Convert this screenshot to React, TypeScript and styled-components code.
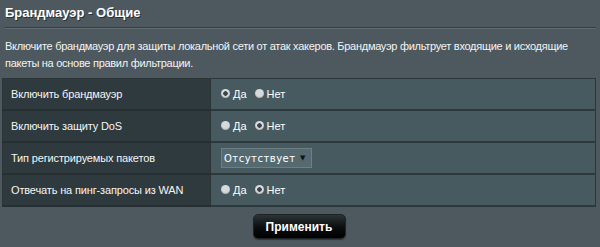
import React, { FC } from 'react';
import styled, { createGlobalStyle } from 'styled-components';

const GlobalStyle = createGlobalStyle`
  html, body {
    margin: 0;
    padding: 0;
    background: #4d595e;
  }
  body {
    font-family: "Liberation Sans", Arial, sans-serif;
    color: #fff;
  }
`;

type RadioRow = { kind: 'radio'; label: string; value: boolean };
type SelectRow = { kind: 'select'; label: string; value: string };
type Row = RadioRow | SelectRow;

const rows: Row[] = [
  { kind: 'radio', label: 'Включить брандмауэр', value: true },
  { kind: 'radio', label: 'Включить защиту DoS', value: false },
  { kind: 'select', label: 'Тип регистрируемых пакетов', value: 'Отсутствует' },
  { kind: 'radio', label: 'Отвечать на пинг-запросы из WAN', value: false },
];

const RadioChoice: FC<{ checked: boolean; label: string }> = ({ checked, label }) => (
  <Choice>
    <RadioDot $checked={checked} />
    <span>{label}</span>
  </Choice>
);

export default function App() {
  const [values, setValues] = React.useState(rows);

  return (
    <Page>
      <GlobalStyle />
      <Title>Брандмауэр - Общие</Title>
      <Description>
        Включите брандмауэр для защиты локальной сети от атак хакеров. Брандмауэр фильтрует входящие и исходящие
        <br />
        пакеты на основе правил фильтрации.
      </Description>
      <Table>
        <tbody>
          {values.map((row, i) => (
            <tr key={row.label}>
              <LabelCell>{row.label}</LabelCell>
              <ValueCell>
                {row.kind === 'radio' ? (
                  <Choices
                    onClick={() =>
                      setValues(values.map((r, j) => (j === i && r.kind === 'radio' ? { ...r, value: !r.value } : r)))
                    }
                  >
                    <RadioChoice checked={row.value} label="Да" />
                    <RadioChoice checked={!row.value} label="Нет" />
                  </Choices>
                ) : (
                  <SelectBox>
                    <span>{row.value}</span>
                    <Arrow>▼</Arrow>
                  </SelectBox>
                )}
              </ValueCell>
            </tr>
          ))}
        </tbody>
      </Table>
      <Actions>
        <ApplyButton>Применить</ApplyButton>
      </Actions>
    </Page>
  );
}

const Page = styled.div`
  width: 600px;
  height: 247px;
  box-sizing: border-box;
  padding: 0 4px 0 2px;
  overflow: hidden;
`;

const Title = styled.div`
  margin-left: 3px;
  height: 28px;
  box-sizing: border-box;
  padding-top: 4px;
  font-size: 13px;
  font-weight: bold;
  line-height: 18px;
  color: #fff;
  text-shadow: 1px 1px 0 #2a3235;
  border-bottom: 1px solid #34403f;
  box-shadow: 0 1px 0 #5f6b70;
`;

const Description = styled.div`
  margin: 10px 0 0 3px;
  font-size: 11px;
  letter-spacing: -0.28px;
  line-height: 17px;
  white-space: nowrap;
  color: #f2f4f4;
`;

const Table = styled.table`
  margin-top: 6px;
  width: 594px;
  border-collapse: collapse;
  border: 1px solid #2c3538;
`;

const LabelCell = styled.td`
  width: 199px;
  height: 30px;
  padding: 0 0 0 8px;
  background: #2f3a3e;
  border-bottom: 2px solid #263033;
  font-size: 11px;
  letter-spacing: -0.15px;
  color: #f4f6f6;
`;

const ValueCell = styled.td`
  height: 30px;
  padding: 0 0 0 10px;
  background: #475a5f;
  border-bottom: 2px solid #2e393c;
  border-left: 1px solid #2b3437;
`;

const Choices = styled.div`
  display: flex;
  align-items: center;
  gap: 8px;
  cursor: pointer;
`;

const Choice = styled.label`
  display: flex;
  align-items: center;
  gap: 3px;
  font-size: 11px;
  color: #fff;
`;

const RadioDot = styled.span<{ $checked: boolean }>`
  display: inline-block;
  width: 9px;
  height: 9px;
  margin-top: -2px;
  border-radius: 50%;
  background: ${(p) => (p.$checked ? 'radial-gradient(circle, #3b4446 0 2px, #d8dcdc 2.5px)' : '#d6dada')};
  box-shadow: inset 0 -1px 1px rgba(0, 0, 0, 0.2);
`;

const SelectBox = styled.div`
  display: inline-flex;
  align-items: center;
  justify-content: space-between;
  width: 91px;
  height: 20px;
  box-sizing: border-box;
  padding: 0 5px 0 2px;
  background: #556a70;
  border: 1px solid #6c7f84;
  font-family: "DejaVu Sans", Verdana, sans-serif;
  font-size: 10px;
  color: #fff;
  letter-spacing: 0.5px;
`;

const Arrow = styled.span`
  font-size: 7px;
  color: #111;
`;

const Actions = styled.div`
  display: flex;
  justify-content: center;
  margin-top: 7px;
`;

const ApplyButton = styled.button`
  width: 93px;
  height: 25px;
  border: 1px solid #1e2426;
  border-radius: 5px;
  background: linear-gradient(to bottom, #2c3437 0%, #0b0d0e 55%, #000 100%);
  color: #fff;
  font-family: "Liberation Sans", Arial, sans-serif;
  font-size: 12px;
  font-weight: bold;
  cursor: pointer;
  box-shadow: 0 1px 1px rgba(0, 0, 0, 0.4);
`;
